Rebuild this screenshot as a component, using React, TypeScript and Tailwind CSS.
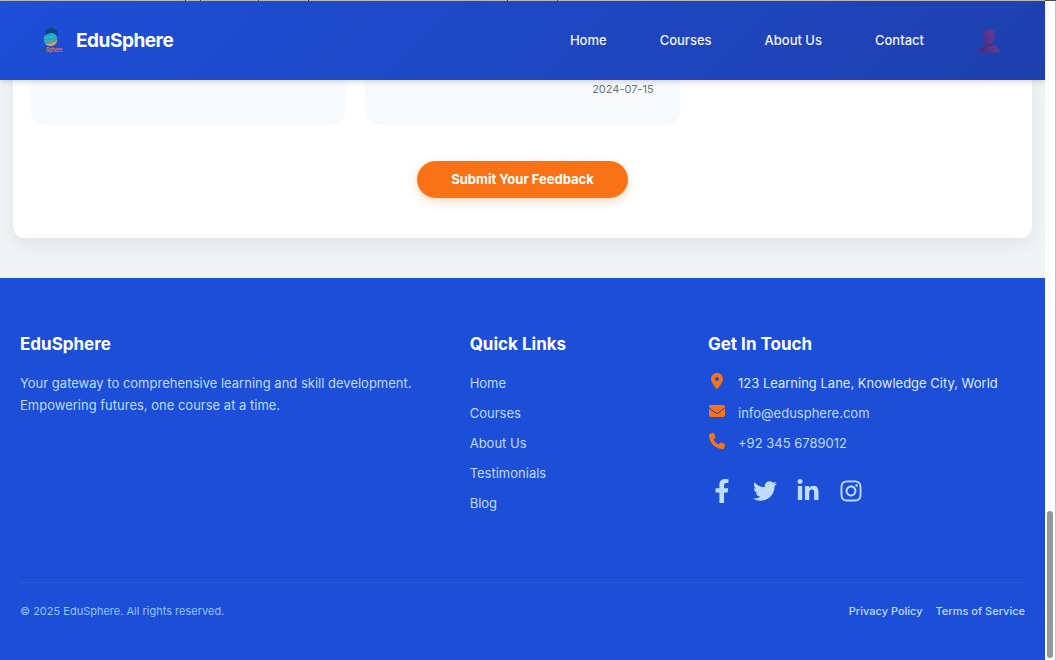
import { FaFacebookF, FaTwitter, FaLinkedinIn, FaInstagram } from "react-icons/fa";
import { FaLocationDot, FaEnvelope, FaPhone } from "react-icons/fa6";

const navLinks = ["Home", "Courses", "About Us", "Contact"];
const quickLinks = ["Home", "Courses", "About Us", "Testimonials", "Blog"];
const socials = [
  { label: "Facebook", Icon: FaFacebookF },
  { label: "Twitter", Icon: FaTwitter },
  { label: "LinkedIn", Icon: FaLinkedinIn },
  { label: "Instagram", Icon: FaInstagram },
];

function Logo() {
  return (
    <svg viewBox="0 0 28 28" className="size-7" aria-hidden="true">
      <defs>
        <linearGradient id="globe" x1="0.35" y1="0" x2="0.6" y2="1">
          <stop offset="0" stopColor="#1698c8" />
          <stop offset="0.3" stopColor="#1fb9cf" />
          <stop offset="0.6" stopColor="#4aa3b4" />
          <stop offset="0.78" stopColor="#c9a27c" />
          <stop offset="1" stopColor="#e88a3c" />
        </linearGradient>
      </defs>
      <circle cx="14.500" cy="12.500" r="6.800" fill="url(#globe)" />
      <path d="M8.200 12.500c4 .8 8.500-.2 12-2.800" stroke="#0b8fb8" strokeWidth="0.500" fill="none" />
      <path d="M9 15.800c4.500.8 8.500-.6 11.800-3.600" stroke="#2372b4" strokeWidth="0.700" fill="none" />
      <path d="M7.500 3.900 15 .8l7 2.900-1.300.8v3c-3-2-7.600-2-10.700.2V5.200z" fill="#0c4383" />
      <path d="M21.200 4.300v4.700" stroke="#0c4383" strokeWidth="0.800" />
      <text x="1" y="25" fontSize="5.500" fontWeight="700" fontFamily="Inter, sans-serif">
        <tspan fill="#12599b">Edu</tspan>
        <tspan fill="#c4745a">Sphere</tspan>
      </text>
    </svg>
  );
}

function UserIcon() {
  return (
    <svg viewBox="0 0 24 26" className="h-[26px] w-6" aria-hidden="true">
      <defs>
        <linearGradient id="bust" x1="0" x2="1" y1="0.3" y2="0">
          <stop offset="0" stopColor="#4c2d78" />
          <stop offset="0.6" stopColor="#5f3996" />
          <stop offset="1" stopColor="#533085" />
        </linearGradient>
      </defs>
      <path
        d="M6.600 5.500C6.600 2.300 7.500 1.300 12 1.300s5.400 1 5.400 4.200v2.200c1 0 1 2.600-.2 3-.4 2-1.300 3.300-2.200 4.300v1.600c4.200.8 7.200 3 8 8H1c.8-5 3.800-7.200 8-8V15C8.100 14 7.200 12.700 6.800 10.700c-1.200-.4-1.200-3-.2-3z"
        fill="url(#bust)"
      />
      <path d="M9 15.500c1.800 1.700 4.200 1.700 6 0v1.400c-1.800 1.300-4.200 1.300-6 0z" fill="#4a2b72" />
    </svg>
  );
}

function Header() {
  return (
    <header className="relative z-10 flex h-[79px] items-center justify-between bg-linear-135 from-[#1d4ed8] to-[#1e40af] pr-11 pl-9 shadow-md">
      <a href="#" className="flex items-center gap-3 text-[19px] leading-7 font-bold tracking-tight text-white">
        <Logo />
        EduSphere
      </a>
      <nav className="flex items-center gap-[53px] text-[13px] font-medium text-[#f1f5f9]">
        {navLinks.map((label) => (
          <a key={label} href="#">
            {label}
          </a>
        ))}
        <button type="button" aria-label="Account">
          <UserIcon />
        </button>
      </nav>
    </header>
  );
}

function Feedback() {
  return (
    <main className="bg-[#f1f3f5] px-[13px] pb-10">
      <section className="rounded-b-xl bg-white px-5 pb-10 shadow-[0_6px_20px_rgba(0,0,0,0.07)]">
        <div className="grid grid-cols-3 gap-6">
          <article className="h-[42px] rounded-b-xl bg-[#f8fafc] shadow-[0_1px_5px_rgba(0,0,0,0.06)]" />
          <article className="h-[42px] rounded-b-xl bg-[#f8fafc] px-6 text-right text-[11px] leading-[18px] text-[#6b7280] shadow-[0_1px_5px_rgba(0,0,0,0.06)]">
            <time dateTime="2024-07-15">2024-07-15</time>
          </article>
        </div>
        <div className="mt-[39px] flex justify-center">
          <button
            type="button"
            className="h-[37px] rounded-full bg-[#f97316] px-[34px] text-[13px] font-bold text-white shadow-[0_3px_10px_rgba(249,115,22,0.3)]"
          >
            Submit Your Feedback
          </button>
        </div>
      </section>
    </main>
  );
}

function Footer() {
  return (
    <footer className="flex flex-1 flex-col bg-[#1d4ed8] px-5 pt-[53px] text-[13px] text-[#bfdbfe]">
      <div className="grid grid-cols-[2fr_1fr_1.5fr] gap-[27px]">
        <section>
          <h3 className="text-[17px] leading-[26px] font-bold text-white">EduSphere</h3>
          <p className="mt-[15px] leading-[22px]">
            Your gateway to comprehensive learning and skill development. Empowering futures, one course at a time.
          </p>
        </section>
        <section>
          <h3 className="text-[17px] leading-[26px] font-bold text-white">Quick Links</h3>
          <ul className="mt-[15px] flex flex-col gap-2 leading-[22px]">
            {quickLinks.map((label) => (
              <li key={label}>
                <a href="#">{label}</a>
              </li>
            ))}
          </ul>
        </section>
        <section>
          <h3 className="text-[17px] leading-[26px] font-bold text-white">Get In Touch</h3>
          <address className="mt-[15px] flex flex-col gap-2 leading-[22px] not-italic">
            <div className="flex gap-3 text-[#dbeafe]">
              <FaLocationDot className="mt-px h-4 w-[18px] text-[#f97316]" />
              123 Learning Lane, Knowledge City, World
            </div>
            <div className="flex gap-3">
              <FaEnvelope className="mt-px h-4 w-[18px] text-[#f97316]" />
              <a href="mailto:info@edusphere.com">info@edusphere.com</a>
            </div>
            <div className="flex gap-3">
              <FaPhone className="mt-px h-4 w-[18px] text-[#f97316]" />
              <a href="tel:+923456789012">+92 345 6789012</a>
            </div>
          </address>
          <div className="mt-[25px] flex gap-[19px] pl-[2px]">
            {socials.map(({ label, Icon }) => (
              <a key={label} href="#" aria-label={label}>
                <Icon className="size-6" />
              </a>
            ))}
          </div>
        </section>
      </div>
      <div className="mt-[68px] flex justify-between border-t border-white/5 pt-5 text-[11px] leading-4">
        <p className="text-[#93c5fd]">© 2025 EduSphere. All rights reserved.</p>
        <div className="flex gap-[13px] font-medium">
          <a href="#">Privacy Policy</a>
          <a href="#">Terms of Service</a>
        </div>
      </div>
    </footer>
  );
}

export default function App() {
  return (
    <div className="flex min-h-screen flex-col bg-white font-['Inter',sans-serif]">
      <svg className="h-px w-full bg-[#b8b8b8]" aria-hidden="true">
        <path d="M185 0h1v1h-1zM200 0h1v1h-1zM258 0h1v1h-1zM308 0h1v1h-1zM507 0h1v1h-1zM557 0h1v1h-1zM1045 0h11v1h-11z" fill="#4b4b4b" />
      </svg>
      <div className="flex flex-1">
        <div className="flex min-w-0 flex-1 flex-col">
          <Header />
          <Feedback />
          <Footer />
        </div>
        <div className="flex w-[11px] flex-col justify-end border-r border-[#c4c4c4] bg-white px-[2px] pb-[2px]" aria-hidden="true">
          <div className="h-[147px] rounded-full bg-[#969696]" />
        </div>
      </div>
    </div>
  );
}
